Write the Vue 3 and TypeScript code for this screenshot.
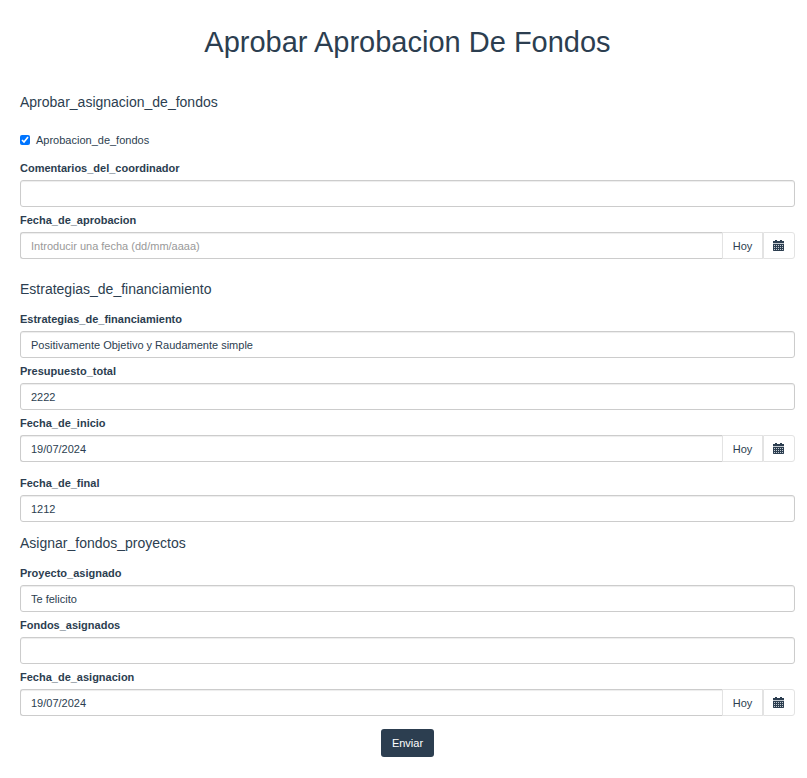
<script setup lang="ts">
import { reactive, ref } from 'vue'

interface Field {
  id: string
  label: string
  value: string
  date?: boolean
  spaced?: boolean
}

interface Section {
  title: string
  approval?: boolean
  spaced?: boolean
  fields: Field[]
}

const approved = ref(true)

const sections = reactive<Section[]>([
  {
    title: 'Aprobar_asignacion_de_fondos',
    approval: true,
    fields: [
      { id: 'comentarios', label: 'Comentarios_del_coordinador', value: '' },
      { id: 'fecha-aprobacion', label: 'Fecha_de_aprobacion', value: '', date: true },
    ],
  },
  {
    title: 'Estrategias_de_financiamiento',
    spaced: true,
    fields: [
      { id: 'estrategias', label: 'Estrategias_de_financiamiento', value: 'Positivamente Objetivo y Raudamente simple' },
      { id: 'presupuesto', label: 'Presupuesto_total', value: '2222' },
      { id: 'fecha-inicio', label: 'Fecha_de_inicio', value: '19/07/2024', date: true },
      { id: 'fecha-final', label: 'Fecha_de_final', value: '1212', spaced: true },
    ],
  },
  {
    title: 'Asignar_fondos_proyectos',
    fields: [
      { id: 'proyecto', label: 'Proyecto_asignado', value: 'Te felicito' },
      { id: 'fondos', label: 'Fondos_asignados', value: '' },
      { id: 'fecha-asignacion', label: 'Fecha_de_asignacion', value: '19/07/2024', date: true },
    ],
  },
])

function setToday(field: Field) {
  const now = new Date()
  const day = String(now.getDate()).padStart(2, '0')
  const month = String(now.getMonth() + 1).padStart(2, '0')
  field.value = `${day}/${month}/${now.getFullYear()}`
}
</script>

<template>
  <main class="page">
    <h1 class="title">Aprobar Aprobacion De Fondos</h1>
    <form class="form" @submit.prevent>
      <section v-for="section in sections" :key="section.title" class="section" :class="{ spaced: section.spaced }">
        <h2 class="heading">{{ section.title }}</h2>
        <label v-if="section.approval" class="check">
          <input v-model="approved" type="checkbox" />
          <span>Aprobacion_de_fondos</span>
        </label>
        <div class="fields">
          <div v-for="field in section.fields" :key="field.id" class="field" :class="{ spaced: field.spaced }">
            <label class="label" :for="field.id">{{ field.label }}</label>
            <div class="group">
              <input
                :id="field.id"
                v-model="field.value"
                class="control"
                :class="{ joined: field.date }"
                type="text"
                :placeholder="field.date ? 'Introducir una fecha (dd/mm/aaaa)' : undefined"
              />
              <template v-if="field.date">
                <button class="addon" type="button" @click="setToday(field)">Hoy</button>
                <button class="addon last" type="button" aria-label="Calendario">
                  <svg class="icon" viewBox="0 0 11 11" aria-hidden="true">
                    <path d="M0 1h2V0h2v1h3V0h2v1h2v2H0z" />
                    <path class="band" d="M0 3h11v1H0z" />
                    <path d="M0 4h11v6.500l-.5.5H.5l-.5-.5z" />
                    <path
                      class="days"
                      d="M1 5h1v1H1zM3 5h1v1H3zM5 5h1v1H5zM7 5h1v1H7zM9 5h1v1H9zM1 7h1v1H1zM3 7h1v1H3zM5 7h1v1H5zM7 7h1v1H7zM9 7h1v1H9zM1 9h1v1H1zM3 9h1v1H3zM5 9h1v1H5zM7 9h1v1H7zM9 9h1v1H9z"
                    />
                  </svg>
                </button>
              </template>
            </div>
          </div>
        </div>
      </section>
      <button class="submit" type="submit">Enviar</button>
    </form>
  </main>
</template>

<style>
body {
  margin: 0;
  background: #fff;
}
</style>

<style scoped>
.page {
  box-sizing: border-box;
  padding: 26px 12px 20px 20px;
  color: #2c3e50;
  font-family: "Liberation Sans", Arial, sans-serif;
  font-size: 11px;
  line-height: 16px;
}

.page * {
  box-sizing: border-box;
}

.title {
  margin: 0 0 35px;
  font-size: 29px;
  font-weight: 400;
  line-height: 32px;
  text-align: center;
}

.form {
  display: flex;
  flex-direction: column;
}

.section {
  margin-bottom: 12px;
}

.section.spaced {
  margin-top: 9px;
}

.heading {
  margin: 0 0 13px;
  font-size: 14px;
  font-weight: 400;
  line-height: 18px;
}

.check {
  display: flex;
  align-items: center;
  gap: 6px;
  width: max-content;
  margin: 21px 0 12px;
}

.check input {
  width: 10px;
  height: 10px;
  margin: 0;
}

.fields {
  display: flex;
  flex-direction: column;
  gap: 5px;
}

.field.spaced {
  margin-top: 8px;
}

.label {
  display: block;
  margin-bottom: 4px;
  font-weight: 700;
}

.group {
  display: flex;
}

.control {
  flex: 1;
  min-width: 0;
  height: 27px;
  padding: 0 10px;
  border: 1px solid #ccc;
  border-radius: 3px;
  background: #fff;
  box-shadow: inset 0 1px 1px rgba(0, 0, 0, 0.075);
  color: #2c3e50;
  font: inherit;
}

.control::placeholder {
  color: #999;
  opacity: 1;
}

.control.joined {
  border-right: 0;
  border-radius: 3px 0 0 3px;
}

.addon {
  display: flex;
  align-items: center;
  justify-content: center;
  width: 41px;
  padding: 0;
  border: 1px solid #e3e3e3;
  background: #fff;
  color: #2c3e50;
  font: inherit;
}

.addon.last {
  justify-content: flex-start;
  width: 32px;
  padding: 0 9px;
  border-radius: 0 3px 3px 0;
}

.icon {
  flex: none;
  width: 11px;
  height: 11px;
  fill: currentColor;
}

.band {
  fill: #c5cbd1;
}

.days {
  fill: #c5cbd1;
}

.submit {
  align-self: center;
  height: 28px;
  margin-top: 1px;
  padding: 0 11px;
  border: 0;
  border-radius: 3px;
  background: #2c3e50;
  color: #fff;
  font: inherit;
}
</style>
